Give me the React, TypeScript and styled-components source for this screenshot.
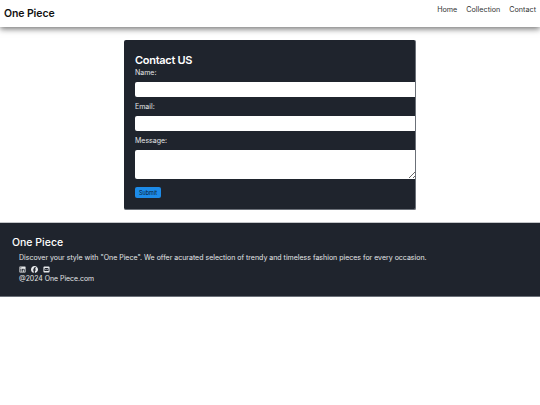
import * as React from 'react';
import styled, { createGlobalStyle } from 'styled-components';
import { FaLinkedin, FaFacebook, FaSquareEnvelope } from 'react-icons/fa6';

const GlobalStyle = createGlobalStyle`
    body {
        margin: 0;
        background: #fff;
        font-family: Inter, "Open Sans", "Liberation Sans", sans-serif;
    }
`;

const NavBar = styled.nav`
    height: 27px;
    display: flex;
    justify-content: space-between;
    padding: 0 4px;
    background: #fff;
    box-shadow: 0 2px 6px rgba(0, 0, 0, 0.55);
`;

const Brand = styled.div`
    font-size: 10.5px;
    font-weight: 600;
    line-height: 28px;
    color: #111;
    letter-spacing: -0.1px;
`;

const NavLinks = styled.div`
    display: flex;
    gap: 9px;
    padding-top: 4px;
`;

const NavLink = styled.a`
    font-size: 7.2px;
    line-height: 11px;
    color: #333;
`;

const Main = styled.main`
    display: flex;
    justify-content: center;
    padding: 13px 0 12px;
`;

const Card = styled.form`
    box-sizing: border-box;
    width: 292px;
    height: 170px;
    padding: 13px 0 0 11px;
    background: #1f242d;
    border-radius: 2px;
    border: 1px solid #6b7078;
    border-width: 0 1px 1px 0;
    overflow: hidden;
`;

const CardTitle = styled.h1`
    margin: 0 0 1px;
    font-size: 11px;
    font-weight: 600;
    line-height: 14px;
    letter-spacing: -0.3px;
    color: #fff;
`;

const Label = styled.label`
    display: block;
    font-size: 7px;
    line-height: 10px;
    color: #e4e6e8;
`;

const Input = styled.input`
    display: block;
    box-sizing: border-box;
    width: 300px;
    height: 15px;
    margin: 4px 0 5px;
    border: 0;
    border-radius: 2px;
    background: #fff;
`;

const TextArea = styled.textarea`
    display: block;
    box-sizing: border-box;
    width: 282px;
    height: 29px;
    margin: 4px 0 8px;
    border: 0;
    border-radius: 2px 0 0 2px;
    background: #fff;
`;

const SubmitButton = styled.button`
    display: block;
    width: 26px;
    height: 11px;
    padding: 0;
    border: 0;
    border-radius: 2px;
    background: #1d8be8;
    font-family: inherit;
    font-size: 5.5px;
    color: #0b1a2a;
`;

const Footer = styled.footer`
    box-sizing: border-box;
    height: 75px;
    padding: 13px 0 0 12px;
    background: #1f242d;
    border-top: 1px solid #c4c6c9;
    border-bottom: 1px solid #6b7078;
`;

const FooterTitle = styled.h2`
    margin: 0 0 4px;
    font-size: 10.5px;
    font-weight: 500;
    line-height: 13px;
    color: #fff;
`;

const FooterBody = styled.div`
    padding-left: 7px;
    font-size: 7px;
    line-height: 10px;
    color: #e4e6e8;
`;

const Socials = styled.div`
    display: flex;
    gap: 5px;
    height: 10px;
    margin-top: 1px;
    align-items: center;
    color: #e8eaec;
    font-size: 7px;
`;

const Copyright = styled.div`
    font-size: 6.9px;
`;

export default function App() {
    return (
        <>
            <GlobalStyle />
            <NavBar>
                <Brand>One Piece</Brand>
                <NavLinks>
                    <NavLink>Home</NavLink>
                    <NavLink>Collection</NavLink>
                    <NavLink>Contact</NavLink>
                </NavLinks>
            </NavBar>
            <Main>
                <Card>
                    <CardTitle>Contact US</CardTitle>
                    <Label>Name:</Label>
                    <Input type="text" />
                    <Label>Email:</Label>
                    <Input type="email" />
                    <Label>Message:</Label>
                    <TextArea />
                    <SubmitButton type="button">Submit</SubmitButton>
                </Card>
            </Main>
            <Footer>
                <FooterTitle>One Piece</FooterTitle>
                <FooterBody>
                    <div>Discover your style with "One Piece". We offer acurated selection of trendy and timeless fashion pieces for every occasion.</div>
                    <Socials>
                        <FaLinkedin />
                        <FaFacebook />
                        <FaSquareEnvelope />
                    </Socials>
                    <Copyright>@2024 One Piece.com</Copyright>
                </FooterBody>
            </Footer>
        </>
    );
}
